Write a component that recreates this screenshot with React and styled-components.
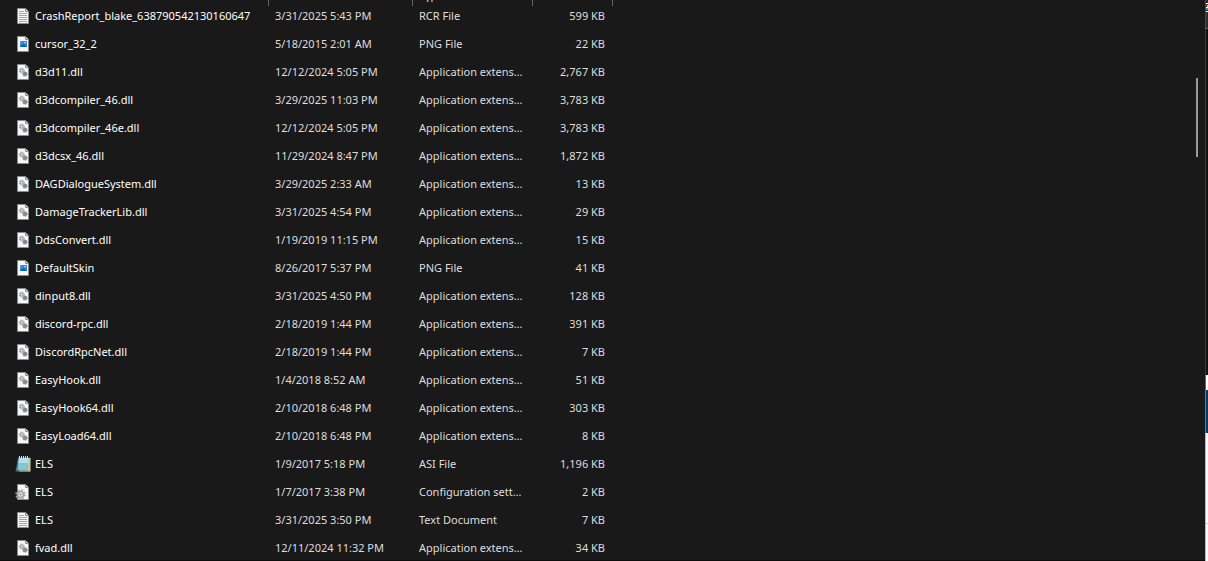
import React from 'react';
import styled, { createGlobalStyle } from 'styled-components';

const GlobalStyle = createGlobalStyle`
  * {
    box-sizing: border-box;
  }

  body {
    margin: 0;
    background: #191919;
    color: #ffffff;
    font-family: 'Noto Sans', sans-serif;
    font-size: 11px;
    line-height: 16px;
  }
`;

const Screen = styled.div`
  display: flex;
  height: 100vh;
  overflow: hidden;
`;

const Explorer = styled.main`
  display: flex;
  flex: 1;
  min-width: 0;
  border-bottom: 1px solid #0c0c0c;
`;

const ListPane = styled.div`
  flex: 1;
  min-width: 0;
  height: 100%;
  overflow: hidden;
`;

const FileTable = styled.table`
  width: 613px;
  table-layout: fixed;
  border-collapse: separate;
  border-spacing: 0;
`;

const HeaderCell = styled.th`
  position: relative;
  width: ${({ $width }) => $width}px;
  height: 2px;
  padding: 0;

  &::after {
    position: absolute;
    top: 0;
    right: 0;
    width: 1px;
    height: 6px;
    background: #636363;
    content: '';
  }
`;

/* The header is scrolled off the top, only the foot of its label shows */
const HeaderLabel = styled.span`
  display: flex;
  align-items: flex-end;
  height: 2px;
  padding-left: 6px;
  overflow: hidden;
  color: #dedede;
  font-weight: 400;
  line-height: 12px;
`;

const Cell = styled.td`
  height: 28px;
  padding: 0 ${({ $right }) => ($right ? 8 : 9)}px 0 6px;
  overflow: hidden;
  color: ${({ $bright }) => ($bright ? '#ffffff' : '#dedede')};
  text-align: ${({ $right }) => ($right ? 'right' : 'left')};
  text-overflow: ellipsis;
  white-space: nowrap;
`;

const FileName = styled.div`
  display: flex;
  align-items: center;
  gap: 4px;
  padding-left: 9px;

  svg {
    flex: none;
  }
`;

const ScrollTrack = styled.div`
  width: 9px;
  padding-top: 78px;
`;

const ScrollThumb = styled.div`
  width: 2px;
  height: 79px;
  background: #9a9a9a;
`;

const NextWindow = styled.aside`
  display: flex;
  flex-direction: column;
  width: 3px;
`;

const Band = styled.div`
  flex: ${({ $height }) => ($height ? `0 0 ${$height}px` : '1')};
  overflow: hidden;
  border-left: 1px solid ${({ $edge }) => $edge};
  background: ${({ $fill }) => $fill};

  svg {
    display: block;
  }
`;

const Page = () => (
  <>
    <path d="M2.5.5h8l3 3v12h-11z" fill="#f7f7f7" stroke="#8c8c8c" />
    <path d="M10.5.5v3h3" fill="#d4d4d4" stroke="#8c8c8c" />
  </>
);

const Gear = ({ cx, cy, r, color }) => (
  <g fill="none" stroke={color}>
    <circle cx={cx} cy={cy} r={r} strokeWidth="1.6" />
    <circle cx={cx} cy={cy} r={r + 1} strokeWidth="1" strokeDasharray="1.2 .8" />
  </g>
);

const drawings = {
  text: (
    <>
      <Page />
      <path d="M4 3.5h5M4 5.5h8M4 7.5h8M4 9.5h8M4 11.5h8M4 13.5h8" stroke="#a3a3a3" />
    </>
  ),
  image: (
    <>
      <Page />
      <path d="M5 5h7v6H5z" fill="#2486e0" />
      <path d="M5 11l3.500-3 3.500 3z" fill="#0f5fb8" />
      <path d="M5 5h3L5 9z" fill="#3fa2f2" />
      <path d="M9.500 6h1.200v1.200H9.500z" fill="#ffffff" />
    </>
  ),
  dll: (
    <>
      <Page />
      <Gear cx={6.7} cy={6.5} r={1.5} color="#a3acb8" />
      <Gear cx={10} cy={10} r={1.2} color="#727c88" />
    </>
  ),
  notepad: (
    <>
      <path d="M3 1.500h12.500L15 15.500H.500z" fill="#3f7484" />
      <path d="M13 2h2.500v13.500H4l.500-1H13z" fill="#cfc39c" />
      <path d="M4 2h9.500L13 14H2.500z" fill="#83c5d6" />
      <path d="M4 2h9.500l-.200 5H3.400z" fill="#b4dfe9" />
      <path d="M4.500 0v3M6.500 0v3M8.500 0v3M10.500 0v3M12.500 0v3" stroke="#c9dde3" />
    </>
  ),
  config: (
    <>
      <Page />
      <circle cx="5.500" cy="10.500" r="3" fill="#e8e8e8" stroke="#a0a0a0" strokeWidth="1.500" />
      <circle cx="5.500" cy="10.500" r="4.500" fill="none" stroke="#a0a0a0" strokeWidth="1.500" strokeDasharray="1.900 1.634" />
      <circle cx="5.500" cy="10.500" r="1" fill="#8b8b8b" />
    </>
  ),
};

const FileIcon = ({ kind }) => (
  <svg width="16" height="16" viewBox="0 0 16 16" aria-hidden="true">
    {drawings[kind]}
  </svg>
);

/* Left edge of the icon in the neighbouring window's title bar */
const WindowIcon = () => (
  <svg width="2" height="12" viewBox="0 0 2 12" shapeRendering="crispEdges" aria-hidden="true">
    <path d="M0 3h2v1H0zM0 11h2v1H0z" fill="#ffffff" />
    <path d="M0 4h1v2H0z" fill="#b02a2a" />
    <path d="M1 5h1v2H1z" fill="#e8c53a" />
    <path d="M0 7h2v1H0z" fill="#ffffff" />
    <path d="M0 8h2v2H0z" fill="#3f8fc4" />
    <path d="M0 10h2v1H0z" fill="#1d2b38" />
  </svg>
);

const dll = (name, date, size) => ({ kind: 'dll', name, date, type: 'Application extension', size });

const files = [
  { kind: 'text', name: 'CrashReport_blake_638790542130160647', date: '3/31/2025 5:43 PM', type: 'RCR File', size: '599 KB' },
  { kind: 'image', name: 'cursor_32_2', date: '5/18/2015 2:01 AM', type: 'PNG File', size: '22 KB' },
  dll('d3d11.dll', '12/12/2024 5:05 PM', '2,767 KB'),
  dll('d3dcompiler_46.dll', '3/29/2025 11:03 PM', '3,783 KB'),
  dll('d3dcompiler_46e.dll', '12/12/2024 5:05 PM', '3,783 KB'),
  dll('d3dcsx_46.dll', '11/29/2024 8:47 PM', '1,872 KB'),
  dll('DAGDialogueSystem.dll', '3/29/2025 2:33 AM', '13 KB'),
  dll('DamageTrackerLib.dll', '3/31/2025 4:54 PM', '29 KB'),
  dll('DdsConvert.dll', '1/19/2019 11:15 PM', '15 KB'),
  { kind: 'image', name: 'DefaultSkin', date: '8/26/2017 5:37 PM', type: 'PNG File', size: '41 KB' },
  dll('dinput8.dll', '3/31/2025 4:50 PM', '128 KB'),
  dll('discord-rpc.dll', '2/18/2019 1:44 PM', '391 KB'),
  dll('DiscordRpcNet.dll', '2/18/2019 1:44 PM', '7 KB'),
  dll('EasyHook.dll', '1/4/2018 8:52 AM', '51 KB'),
  dll('EasyHook64.dll', '2/10/2018 6:48 PM', '303 KB'),
  dll('EasyLoad64.dll', '2/10/2018 6:48 PM', '8 KB'),
  { kind: 'notepad', name: 'ELS', date: '1/9/2017 5:18 PM', type: 'ASI File', size: '1,196 KB' },
  { kind: 'config', name: 'ELS', date: '1/7/2017 3:38 PM', type: 'Configuration settings', size: '2 KB' },
  { kind: 'text', name: 'ELS', date: '3/31/2025 3:50 PM', type: 'Text Document', size: '7 KB' },
  dll('fvad.dll', '12/11/2024 11:32 PM', '34 KB'),
];

const App = () => (
  <>
    <GlobalStyle />
    <Screen>
      <Explorer>
        <ListPane>
          <FileTable>
            <thead>
              <tr>
                <HeaderCell $width={269} aria-label="Name" />
                <HeaderCell $width={144} aria-label="Date modified" />
                <HeaderCell $width={120}>
                  <HeaderLabel>Type</HeaderLabel>
                </HeaderCell>
                <HeaderCell $width={80} aria-label="Size" />
              </tr>
            </thead>
            <tbody>
              {files.map((file) => (
                <tr key={`${file.name}-${file.type}`}>
                  <Cell $bright>
                    <FileName>
                      <FileIcon kind={file.kind} />
                      {file.name}
                    </FileName>
                  </Cell>
                  <Cell>{file.date}</Cell>
                  <Cell>{file.type}</Cell>
                  <Cell $right>{file.size}</Cell>
                </tr>
              ))}
            </tbody>
          </FileTable>
        </ListPane>
        <ScrollTrack>
          <ScrollThumb />
        </ScrollTrack>
      </Explorer>
      <NextWindow>
        <Band $height={28} $edge="#4a4a4a" $fill="#2d2d2d">
          <WindowIcon />
        </Band>
        <Band $height={1} $edge="#5a5a5a" $fill="#5a5a5a" />
        <Band $height={346} $edge="#3c3c3c" $fill="#121212" />
        <Band $height={15} $edge="#6a6a6a" $fill="#ffffff" />
        <Band $height={43} $edge="#6a7a8a" $fill="#003a6c" />
        <Band $height={90} $edge="#b8b8b8" $fill="#f8faff" />
        <Band $height={1} $edge="#b8b8b8" $fill="#d0d0d0" />
        <Band $edge="#b8b8b8" $fill="#f8faff" />
      </NextWindow>
    </Screen>
  </>
);

export default App;
